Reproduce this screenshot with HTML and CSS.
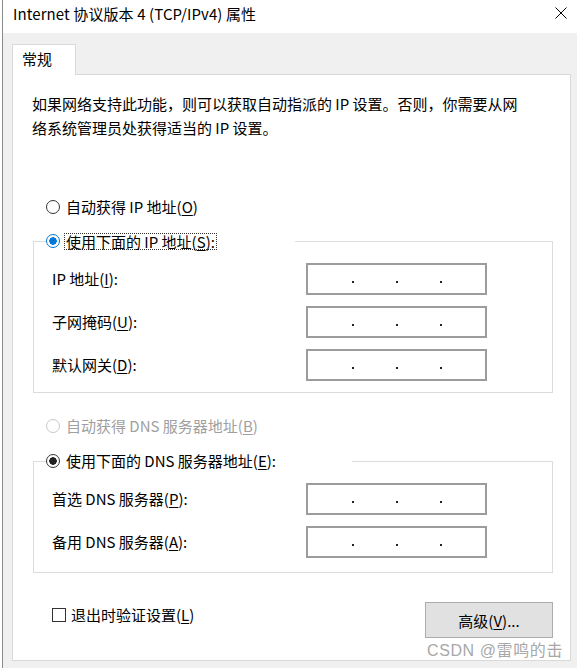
FILE: index.html
```html
<!DOCTYPE html>
<html lang="zh-CN">
<head>
<meta charset="utf-8">
<title>Internet 协议版本 4 (TCP/IPv4) 属性</title>
<link rel="stylesheet" href="styles.css">
</head>
<body>
<div class="window">
  <div class="titlebar">
    <span class="title">Internet 协议版本 4 (TCP/IPv4) 属性</span>
    <svg class="close" width="12" height="12" viewBox="0 0 12 12"><path d="M0.5 0.5 L11.5 11.5 M11.5 0.5 L0.5 11.5" stroke="#000" stroke-width="1" fill="none"/></svg>
  </div>
  <div class="content">
    <div class="tabs"><div class="tab">常规</div></div>
    <div class="panel">
      <p class="desc">如果网络支持此功能，则可以获取自动指派的 IP 设置。否则，你需要从网<br>络系统管理员处获得适当的 IP 设置。</p>

      <div class="radio-row first">
        <span class="radio"></span><span class="rlabel">自动获得 IP 地址(<u>O</u>)</span>
      </div>

      <fieldset class="group g1">
        <legend class="legend l1"><span class="radio blue"></span><span class="rlabel focus">使用下面的 IP 地址(<u>S</u>):</span></legend>
        <div class="field"><span class="flabel">IP 地址(<u>I</u>):</span><div class="ipbox"><i></i><i></i><i></i></div></div>
        <div class="field"><span class="flabel">子网掩码(<u>U</u>):</span><div class="ipbox"><i></i><i></i><i></i></div></div>
        <div class="field"><span class="flabel">默认网关(<u>D</u>):</span><div class="ipbox"><i></i><i></i><i></i></div></div>
      </fieldset>

      <div class="radio-row dns1 disabled">
        <span class="radio off"></span><span class="rlabel">自动获得 DNS 服务器地址(<u>B</u>)</span>
      </div>

      <fieldset class="group g2">
        <legend class="legend l2"><span class="radio dark"></span><span class="rlabel">使用下面的 DNS 服务器地址(<u>E</u>):</span></legend>
        <div class="field"><span class="flabel">首选 DNS 服务器(<u>P</u>):</span><div class="ipbox"><i></i><i></i><i></i></div></div>
        <div class="field"><span class="flabel">备用 DNS 服务器(<u>A</u>):</span><div class="ipbox"><i></i><i></i><i></i></div></div>
      </fieldset>

      <div class="footer">
        <div class="check-row"><span class="checkbox"></span><span class="clabel">退出时验证设置(<u>L</u>)</span></div>
        <button class="btn" type="button">高级(<u>V</u>)...</button>
      </div>
    </div>
    <div class="watermark">CSDN @雷鸣的击</div>
  </div>
</div>
</body>
</html>
```

FILE: styles.css
```css
* { box-sizing: border-box; }
html, body { margin: 0; padding: 0; background: #fff; }
body {
  width: 577px;
  height: 668px;
  overflow: hidden;
  font-family: "Noto Sans CJK SC", "Noto Sans", sans-serif;
  font-size: 15px;
  color: #000;
}
u { text-decoration: underline; text-underline-offset: 2px; text-decoration-thickness: 1px; }

.window {
  margin-left: 2px;
  border-left: 1px solid #8a8a8a;
  height: 668px;
  display: flex;
  flex-direction: column;
}

.titlebar {
  height: 33px;
  background: #fff;
  display: flex;
  align-items: flex-start;
  padding-left: 10px;
}
.title {
  line-height: 20px;
  margin-top: 4px;
  font-size: 15px;
  letter-spacing: 0.1px;
}
.close { margin-left: auto; margin-right: 10px; margin-top: 7px; }

.content {
  flex: 1;
  background: #f0f0f0;
  padding: 11px 6px 0 9px;
  position: relative;
}

.tabs { display: flex; height: 30px; }
.tab {
  width: 64px;
  height: 31px;
  background: #fff;
  border: 1px solid #d9d9d9;
  border-bottom: none;
  padding-left: 9px;
  line-height: 28px;
  font-size: 15px;
  position: relative;
  z-index: 1;
}

.panel {
  background: #fff;
  border: 1px solid #d9d9d9;
  height: 587px;
  padding: 17px 17px 0 20px;
  display: flex;
  flex-direction: column;
}

.desc {
  margin: 0 0 0 -1px;
  line-height: 24px;
  font-size: 15px;
}

.radio-row {
  display: flex;
  align-items: center;
  height: 18px;
  padding-left: 13px;
}
.radio-row.first { margin-top: 58px; }
.radio-row.dns1 { margin-top: 24px; }
.disabled { color: #a0a0a0; }

.radio {
  width: 14px;
  height: 14px;
  border-radius: 50%;
  border: 1px solid #333;
  background: #fff;
  flex: none;
}
.radio.blue {
  border: 1.5px solid #0078d7;
  background: radial-gradient(circle, #0078d7 0 3.5px, #fff 4px);
}
.radio.dark {
  border: 1.5px solid #333;
  background: radial-gradient(circle, #222 0 3.5px, #fff 4px);
}
.radio.off { border-color: #c8c8c8; }

.rlabel { margin-left: 6px; line-height: 18px; white-space: nowrap; }
.rlabel.focus {
  margin-left: 4px;
  border: 1px dotted #333;
  padding: 0 1px;
  line-height: 15px;
}

.group {
  margin: 16px 0 0 0;
  border: 1px solid #dcdcdc;
  padding: 13px 0 11px 12px;
  min-width: 0;
}
.g2 { margin-top: 17px; padding-bottom: 14px; }

.legend {
  padding: 0;
  height: 18px;
  display: flex;
  align-items: center;
  background: #fff;
}
.l1 { width: 249px; }
.l2 { width: 306px; }

.field {
  display: grid;
  grid-template-columns: 254px 181px;
  align-items: center;
  padding-left: 6px;
  height: 32px;
}
.field + .field { margin-top: 11px; }
.flabel { line-height: 18px; white-space: nowrap; }

.ipbox {
  height: 32px;
  border: 2px solid #9c9c9c;
  background: #fff;
  display: flex;
  justify-content: center;
  align-items: center;
  gap: 42px;
  padding-top: 5px;
}
.ipbox i {
  display: block;
  width: 2px;
  height: 2px;
  background: #222;
}

.footer {
  margin-top: 29px;
  display: flex;
  align-items: flex-start;
  justify-content: space-between;
}
.check-row {
  display: flex;
  align-items: center;
  height: 18px;
  margin-top: 4px;
  padding-left: 19px;
}
.checkbox {
  width: 14px;
  height: 14px;
  border: 1px solid #333;
  background: #fff;
}
.clabel { margin-left: 5px; line-height: 18px; }

.btn {
  width: 128px;
  height: 36px;
  background: #e1e1e1;
  border: 1px solid #adadad;
  font-family: inherit;
  font-size: 15px;
  color: #000;
  padding: 0;
}

.watermark {
  position: absolute;
  left: 424px;
  top: 608px;
  font-size: 16px;
  line-height: 20px;
  color: #a8a8a8;
  font-family: "Liberation Sans", "Noto Sans CJK SC", sans-serif;
  letter-spacing: 0.6px;
}
```
